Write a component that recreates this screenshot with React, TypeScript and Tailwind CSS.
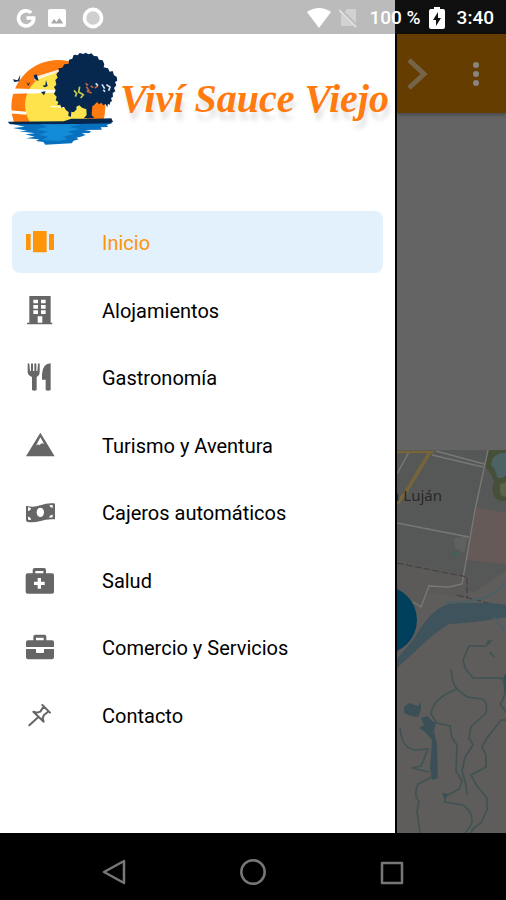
import { useState } from "react";
import type { ReactNode } from "react";

type MenuItem = { label: string; icon: ReactNode };

const MENU: MenuItem[] = [
  {
    label: "Inicio",
    icon: <path d="M0 18h14v48H0zM21 9h41v64H21zM69 18h15v48H69z" />,
  },
  {
    label: "Alojamientos",
    icon: (
      <path
        fillRule="evenodd"
        d="M10 0h64v80h5v5H3v-5h7zM22 11v11h14V11zM45 11v11h14V11zM22 27v11h14V27zM45 27v11h14V27zM22 43v11h14V43zM45 43v11h14V43zM35 61v19h14V61z"
      />
    ),
  },
  {
    label: "Gastronomía",
    icon: (
      <>
        <path d="M5 2q3-2 5 0l2 22h3V2q3-2 6 0v22h4V2q3-2 6 0v22h3l2-22q3-2 5 0v25q0 10-9 15v39q-7 5-14 0V42Q5 37 5 27z" />
        <path d="M74 1v80q-8 5-15 0V50H48V33Q50 2 74 1z" />
      </>
    ),
  },
  {
    label: "Turismo y Aventura",
    icon: (
      <>
        <path d="M43 5 86 76H0z" />
        <path fill="#fff" d="M43 19 54 38l-7-1-7 6-4-3-6 4z" />
      </>
    ),
  },
  {
    label: "Cajeros automáticos",
    icon: (
      <>
        <path d="M1 23q20 7 42-1t40-6q4 0 4 4v44q-24-2-43 5-22 6-39 3-5-1-5-5V27q0-3 1-4z" />
        <ellipse cx="43" cy="43" rx="11" ry="14" fill="#fff" />
        <path fill="#fff" d="M6 28q9 1 9 4-1 6-9 7zM6 56q9 1 9 10l-9-1zM70 22l10-1v9q-8 0-10-8zM80 50v8l-10 1q0-8 10-9z" />
      </>
    ),
  },
  {
    label: "Salud",
    icon: (
      <path
        fillRule="evenodd"
        d="M20 22V12q0-6 6-6h28q6 0 6 6v10h18q6 0 6 6v49q0 6-6 6H5q-6 0-6-6V28q0-6 6-6zM28 15v7h24v-7zM35 36v11H24v10h11v11h10V57h11V47H45V36z"
      />
    ),
  },
  {
    label: "Comercio y Servicios",
    icon: (
      <>
        <path
          fillRule="evenodd"
          d="M22 22V11q0-6 6-6h27q6 0 6 6v11h17q6 0 6 6v14H0V28q0-6 6-6zM30 14v8h23v-8z"
        />
        <path d="M0 48h30v9q0 3 3 3h18q3 0 3-3v-9h30v25q0 6-6 6H6q-6 0-6-6z" />
      </>
    ),
  },
  {
    label: "Contacto",
    icon: (
      <path
        fill="none"
        stroke="currentColor"
        strokeWidth="6"
        strokeLinejoin="round"
        strokeLinecap="round"
        d="M49 12 72 35M53 17 43 32l-10 3-11-3 31 30-3-11 4-9 14-11M37 48 10 73"
      />
    ),
  },
];

function StatusBar() {
  return (
    <header className="flex h-[34px] items-center bg-[linear-gradient(to_right,#bbbbbb_78%,#0f0f0f_78%)] px-3 pt-[2px] font-['Roboto',sans-serif] text-[19px] font-medium text-white">
      <div className="flex flex-1 items-center gap-[11px] pl-1">
        <svg viewBox="0 0 20 20" className="size-5" fill="none" stroke="#fff" strokeWidth="3.6">
          <path d="M15.3 4.8A7.6 7.6 0 1 0 17.7 10H10.5" />
        </svg>
        <svg viewBox="0 0 20 20" className="size-5">
          <rect x="1" y="1" width="18" height="18" rx="2" fill="#fff" />
          <path d="M4 15.5 7 11l2.5 3 3-4 3.8 5.5z" fill="#a9a9a9" />
        </svg>
        <svg viewBox="0 0 22 22" className="ml-1 size-[22px]">
          <circle cx="11" cy="11" r="8.6" fill="#cfcfcf" stroke="#fff" strokeWidth="3.6" />
        </svg>
      </div>
      <div className="flex items-center">
        <svg viewBox="0 0 24 20" className="mr-2 h-5 w-6" fill="#fff">
          <path d="M0 4Q12-4 24 4L12 20z" />
        </svg>
        <svg viewBox="0 0 20 20" className="mr-2 size-5">
          <path d="M2 7 8 1h9v17H2z" fill="#d2d2d2" />
          <path d="M1 2 18 19" stroke="#bbb" strokeWidth="4" />
          <path d="M0 2 17 19" stroke="#dedede" strokeWidth="2" />
        </svg>
        <span className="pl-[2px]">100 %</span>
        <svg viewBox="0 0 16 22" className="mr-3 ml-2 h-[22px] w-4">
          <path d="M5 0h6v2h3q2 0 2 2v16q0 2-2 2H2q-2 0-2-2V4q0-2 2-2h3z" fill="#fff" />
          <path d="M9 5 4 13h3v6l5-8H9z" fill="#111" />
        </svg>
        <time>3:40</time>
      </div>
    </header>
  );
}

function Logo() {
  return (
    <div className="flex items-center pl-[7px]">
      <svg viewBox="24 30 339 294" className="h-[98px] w-[113px] shrink-0" role="img" aria-label="Viví Sauce Viejo">
        <clipPath id="horizon">
          <path d="M20 20h340v227H20z" />
        </clipPath>
        <g clipPath="url(#horizon)">
          <circle cx="178" cy="201" r="141" fill="#ff7a0f" />
          <circle cx="175" cy="195" r="97" fill="#ffe34d" />
          <path d="M30 145 176 150v7L30 162zM30 211l52 4v9l-52-4z" fill="#fff" />
          <path d="M106 111 184 87v7l-78 28zM84 148l98 4v5l-98 4zM155 197l80 5v4l-80-5z" fill="#fff" opacity=".85" />
        </g>
        <path
          fill="#06284f"
          d="M226 44l10 2 6-7 12 3 5-4 10 5 8-3 8 8 10 1 5 10 11 2 5 12-2 9 13 3 5 10 9-2 4 13 8 4 2 12-7 4 4 10-7 8 4 10-8 5 1 11-6 4 3 9-5 3-2 9-5-4-2 11-6-10-6 4-6-8-7 5-6-7-9 10-5 2-2 27 8 9-32 1 9-10-1-17-13-5-8-7-9 4 1 8-9 9-7-2-1 15-8-2 1-12-8-5-6-11-8 3-3-9-9 1 3-9-8-5 3-11-8-8 5-11-5-10 7-7-3-14 7-7-4-10 8-9-2-9 12-2 6-10 13-2 1-12 10-3 4-11 10-1z"
        />
        <g fill="none" strokeWidth="5">
          <path d="M225 151l8 9-4 10m13-30-3 16 14 8-8 10" stroke="#c4cd49" />
          <path d="M262 140l9 14m4-16 8 5m-20 10 15 6m-18-29 7 6m21 8 9-7" stroke="#c5663f" />
          <path d="M309 133l8 13m5-12 11 7-4 11m-16-3 5 6M290 130l7 7" stroke="#dbe4ef" />
        </g>
        <path
          fill="#06284f"
          d="M42 118l14 3 8-17-3 20-15 2zM82 122l5 10 8-7-8 14zM104 106l9-3 6 20-12-6zM130 137l9-1 2-16 5 18-9 4zM126 156l14-2-5 12z"
        />
        <path
          fill="#0871bf"
          d="M26 249h315l-18 6 4 6-22 1 4 7-52 1 19 4-5 5-23 1 12 5-17 6-11 2 7 5-15 4-6 8-79 4-6-8-23-3 11-5-40-3 26-5-28-7 29-3-48-6 25-2-43-8 35-4z"
        />
        <path fill="#1595df" d="M118 251h130l-37 10 31 7-37 7 20 7-33 8 13 6-23 7-53-3 19-10-29-6 28-9-36-7 36-8z" opacity=".75" />
        <path fill="#06284f" d="M26 245l168-1 23-8h75l45-1 5 10-7 5-94 2-207 1z" />
      </svg>
      <p className="font-['Liberation_Serif',serif] text-[40px] leading-none font-bold whitespace-nowrap text-[#ff7a0f] italic [text-shadow:2px_8px_4px_rgba(0,0,0,0.1)]">
        Viví Sauce Viejo
      </p>
    </div>
  );
}

function TownMap() {
  return (
    <svg viewBox="0 0 110 383" preserveAspectRatio="xMinYMin slice" className="min-h-0 w-full flex-1 bg-[#5f5d5b]">
      <path d="M0 0h110v120L78 142 0 130z" fill="#565757" />
      <path d="M0 110 74 126 66 148 32 142 0 185z" fill="#5b5a59" />
      <path d="M78 57 110 63v51L68 110z" fill="#655a58" />
      <path d="M91 0h19v50q-8 3-13-4-3-7 0-14-2-8-8-14-2-9 2-18z" fill="#465039" />
      <path d="M96 8q6-6 14-5v22q-6 5-10 2-1-8-6-12z" fill="#4d6265" />
      <path d="M103 34l7-2v14q-7 2-7-5z" fill="#59624a" />
      <circle cx="58" cy="104" r="2" fill="#36675a" />
      <path d="M57 88l14-2-4 17-9-5z" fill="#666765" opacity=".6" />
      <g fill="none" stroke="#777876" strokeWidth="1.4">
        <path d="M0 73 72 87M39 1 87 14M35 5 86 17M91 0 78 60 65 134 52 137 32 136 24 157 16 152M12 2 0 24" />
      </g>
      <path d="M33 2Q24 17 9 42L0 54" fill="none" stroke="#78643b" strokeWidth="3.5" />
      <path d="M0 2h37" stroke="#78643b" strokeWidth="2.5" />
      <path d="M0 113 70 127v21M60 145l50 13" fill="none" stroke="#444" strokeWidth="1.3" strokeDasharray="7 2" />

      <path d="M16 190Q35 157 52 154q31-3 58 1v12q-36 6-58 7Q37 183 25 195L0 218v-9z" fill="#3e535b" />
      <path d="M48 152Q93 154 110 131M97 167q8 14 13 14" fill="none" stroke="#4d5f64" strokeWidth="2" />
      <g fill="none" stroke="#3f5353" strokeWidth="1.7" strokeLinejoin="round">
        <path d="M54 219q1 15 6 20Q36 248 34 264l6 9 13 3 2 12 5 7-1 26 6 10-3 8-13 7" />
        <path d="M60 239l10 8 15 2q6 2 4 14l-15 14-2 11 4 7-8 12-3 14 4 14 1 10" />
        <path d="M72 196h17l6-6m-3 0-3 6m4 6 4 5M72 196l-6 14 2 8 8 10h34" />
        <path d="M105 228q7 15-2 26l7 9M110 270h-6l-14 18-5 9 4 8v12l-15 8 6 11 10 12v12l-6 13q-12 6-13 20" />
        <path d="M3 278q2 22 17 22l11-1-7 17-9 2 17 4M35 327l-14 7q-5 12 1 17l-2 10 3 22M48 344v8l18 3q12 9 8 20l-7 10" />
      </g>
      <path d="M7 257l5-4 9 3 3-4v8l-3 7-7-1-7-3zM24 268l7-2 3 4 5 3-2 8 3 13 1 34-6 2-2-12 2-28-7-8-6-4 5-3z" fill="#3b5056" />
      <path d="M107 224l3 2v15h-3zM45 343l6 1-3 5z" fill="#365058" />
      <circle cx="-14" cy="170" r="34" fill="#00405d" />
      <text x="45" y="51" textAnchor="end" fontSize="15" fill="#292929" fontFamily="'Noto Sans', sans-serif">
        a Luján
      </text>
    </svg>
  );
}

export default function App() {
  const [active, setActive] = useState("Inicio");

  return (
    <div className="flex min-h-screen flex-col bg-black font-['Roboto',sans-serif]">
      <StatusBar />

      <div className="flex flex-1">
        <aside className="flex w-[78%] shrink-0 flex-col bg-white pt-4">
          <Logo />
          <nav className="mx-3 mt-[63px] flex flex-1 flex-col justify-between pb-[87px]">
            {MENU.map((item) => (
              <button
                key={item.label}
                onClick={() => setActive(item.label)}
                className={`flex h-[62px] items-center gap-12 rounded-lg pl-[14px] text-left text-[20px] ${
                  active === item.label ? "bg-[#e3f1fd] text-[#ff9508]" : "text-black"
                }`}
              >
                <svg
                  viewBox="0 0 84 84"
                  fill="currentColor"
                  className={`size-7 shrink-0 overflow-visible ${active === item.label ? "" : "text-[#666666]"}`}
                >
                  {item.icon}
                </svg>
                <span className="pt-[2px]">{item.label}</span>
              </button>
            ))}
          </nav>
        </aside>

        <main className="flex min-w-0 flex-1 flex-col border-l-2 border-black bg-[#646464]">
          <div className="flex h-[79px] items-center justify-between bg-[#663d00] pr-5 pl-2 shadow-[0_2px_3px_rgba(0,0,0,0.25)]">
            <button aria-label="Siguiente">
              <svg viewBox="0 0 24 34" className="h-[34px] w-6" fill="none" stroke="#756448" strokeWidth="5">
                <path d="M4 3 19 17 4 31" />
              </svg>
            </button>
            <button aria-label="Más opciones">
              <svg viewBox="0 0 20 24" className="h-6 w-5" fill="#888580">
                <circle cx="10" cy="3" r="3" />
                <circle cx="10" cy="12" r="3" />
                <circle cx="10" cy="21" r="3" />
              </svg>
            </button>
          </div>
          <div className="h-[337px]" />
          <TownMap />
        </main>
      </div>

      <footer className="grid h-[67px] grid-cols-3 place-items-center bg-black px-11 pt-[10px]">
        <button aria-label="Atrás">
          <svg viewBox="0 0 26 26" className="size-[26px]" fill="none" stroke="#777" strokeWidth="2.5" strokeLinejoin="round">
            <path d="M23 2v22L3 13z" />
          </svg>
        </button>
        <button aria-label="Inicio del dispositivo">
          <svg viewBox="0 0 26 26" className="size-[26px]" fill="none" stroke="#777" strokeWidth="2.5">
            <circle cx="13" cy="13" r="11.7" />
          </svg>
        </button>
        <button aria-label="Recientes">
          <svg viewBox="0 0 26 26" className="size-[26px]" fill="none" stroke="#777" strokeWidth="2.5">
            <path d="M3 4h20v20H3z" strokeLinejoin="round" />
          </svg>
        </button>
      </footer>
    </div>
  );
}
